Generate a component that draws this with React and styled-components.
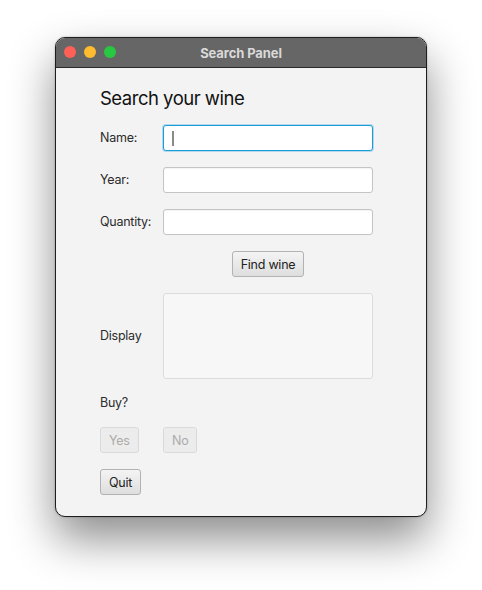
import React from 'react';
import styled, { createGlobalStyle } from 'styled-components';

const GlobalStyle = createGlobalStyle`
  html, body {
    margin: 0;
    padding: 0;
    background: #ffffff;
  }
  body {
    font-family: Inter, "Noto Sans", "Liberation Sans", sans-serif;
  }
`;

const Page = styled.div`
  width: 482px;
  height: 590px;
  padding: 37px 0 0 55px;
  box-sizing: border-box;
`;

const Window = styled.div`
  width: 372px;
  height: 480px;
  box-sizing: border-box;
  border: 1px solid #1e1e1e;
  border-radius: 10px;
  overflow: hidden;
  background: #f3f3f3;
  box-shadow: 0 22px 45px rgba(0, 0, 0, 0.45), 0 0 2px rgba(0, 0, 0, 0.3);
  display: flex;
  flex-direction: column;
`;

const TitleBar = styled.div`
  position: relative;
  height: 29px;
  flex: none;
  background: #666666;
  border-bottom: 1px solid #2a2a2a;
  display: flex;
  align-items: center;
  justify-content: center;
`;

const Lights = styled.div`
  position: absolute;
  left: 8px;
  top: 8px;
  display: flex;
  gap: 8px;
`;

const Light = styled.span`
  width: 12px;
  height: 12px;
  border-radius: 50%;
  background: ${p => p.color};
`;

const Title = styled.div`
  font-size: 13px;
  font-weight: 700;
  color: #d9d9d9;
  letter-spacing: -0.1px;
`;

const Content = styled.div`
  padding: 18px 0 0 44px;
  display: grid;
  grid-template-columns: 63px 210px;
  grid-auto-rows: auto;
  row-gap: 16px;
  align-items: center;
  letter-spacing: -0.25px;
`;

const Heading = styled.h1`
  grid-column: 1 / span 2;
  margin: 0 0 -1px 0;
  font-size: 18.5px;
  line-height: 24px;
  font-weight: 400;
  color: #111;
  letter-spacing: -0.5px;
`;

const Label = styled.div`
  font-size: 12.5px;
  color: #2b2b2b;
  line-height: 16px;
  grid-column: ${p => (p.wide ? '1 / span 2' : 'auto')};
`;

const Field = styled.div`
  position: relative;
  height: 26px;
  box-sizing: border-box;
  background: #ffffff;
  border-radius: 3px;
  border: 1px solid ${p => (p.focused ? '#1a9bd7' : '#c4c4c4')};
  box-shadow: ${p =>
    p.focused ? '0 0 0 1px rgba(60, 170, 225, 0.35)' : 'inset 0 1px 1px rgba(0,0,0,0.05)'};
`;

const Caret = styled.span`
  position: absolute;
  left: 8px;
  top: 5px;
  width: 2px;
  height: 15px;
  background: #8a8a8a;
`;

const Center = styled.div`
  grid-column: 2;
  display: flex;
  justify-content: center;
`;

const Button = styled.button`
  height: 26px;
  padding: 0 ${p => p.pad || 8}px;
  box-sizing: border-box;
  font-family: inherit;
  font-size: 12.5px;
  letter-spacing: -0.25px;
  border-radius: 3px;
  border: 1px solid ${p => (p.disabled ? '#dadada' : '#b2b2b2')};
  color: ${p => (p.disabled ? '#ababab' : '#222')};
  background: ${p =>
    p.disabled ? '#ececec' : 'linear-gradient(#f4f4f4, #dedede)'};
  justify-self: start;
`;

const Display = styled.div`
  height: 86px;
  box-sizing: border-box;
  border: 1px solid #dcdcdc;
  border-radius: 3px;
  background: #f7f7f7;
`;

export default function App() {
  return (
    <Page>
      <GlobalStyle />
      <Window>
        <TitleBar>
          <Lights>
            <Light color="#fe5f57" />
            <Light color="#febc2e" />
            <Light color="#28c840" />
          </Lights>
          <Title>Search Panel</Title>
        </TitleBar>
        <Content>
          <Heading>Search your wine</Heading>
          <Label>Name:</Label>
          <Field focused>
            <Caret />
          </Field>
          <Label>Year:</Label>
          <Field />
          <Label>Quantity:</Label>
          <Field />
          <Center>
            <Button>Find wine</Button>
          </Center>
          <Label>Display</Label>
          <Display />
          <Label wide>Buy?</Label>
          <Button disabled>Yes</Button>
          <Button disabled>No</Button>
          <Button>Quit</Button>
        </Content>
      </Window>
    </Page>
  );
}
